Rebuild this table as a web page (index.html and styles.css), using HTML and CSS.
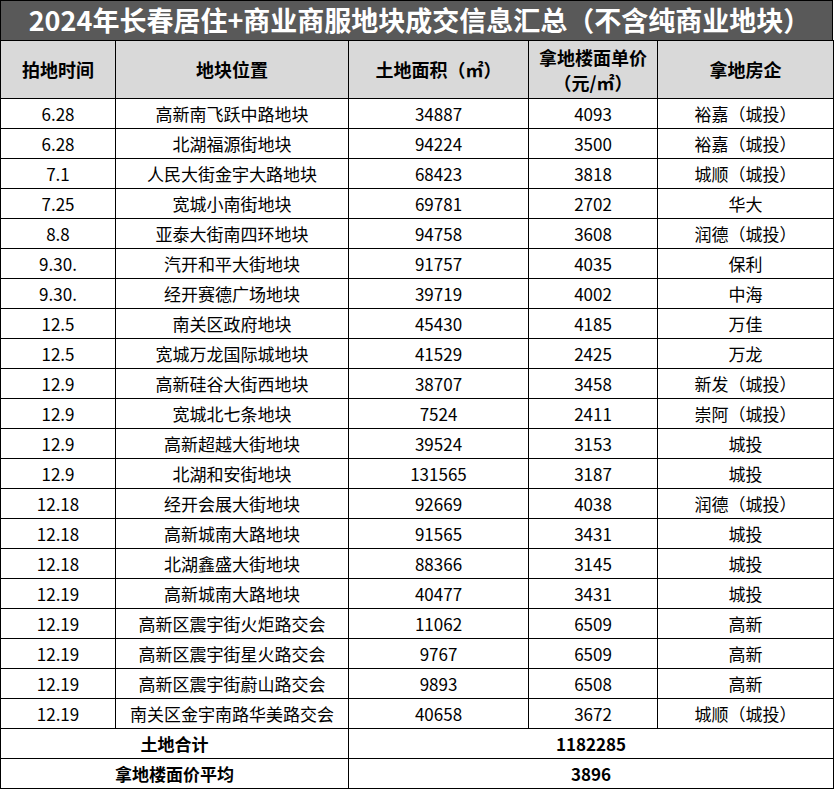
FILE: index.html
```html
<!DOCTYPE html>
<html lang="zh-CN">
<head>
<meta charset="utf-8">
<title>2024年长春居住+商业商服地块成交信息汇总</title>
<link rel="stylesheet" href="styles.css">
</head>
<body>
<div class="sheet">
  <div class="title">2024年长春居住+商业商服地块成交信息汇总（不含纯商业地块）</div>
  <table class="grid">
    <colgroup>
      <col class="c1"><col class="c2"><col class="c3"><col class="c4"><col class="c5">
    </colgroup>
    <thead>
      <tr class="head">
        <th>拍地时间</th>
        <th>地块位置</th>
        <th>土地面积（㎡）</th>
        <th>拿地楼面单价<br>（元/㎡）</th>
        <th>拿地房企</th>
      </tr>
    </thead>
    <tbody>
      <tr><td>6.28</td><td>高新南飞跃中路地块</td><td>34887</td><td>4093</td><td>裕嘉（城投）</td></tr>
      <tr><td>6.28</td><td>北湖福源街地块</td><td>94224</td><td>3500</td><td>裕嘉（城投）</td></tr>
      <tr><td>7.1</td><td>人民大街金宇大路地块</td><td>68423</td><td>3818</td><td>城顺（城投）</td></tr>
      <tr><td>7.25</td><td>宽城小南街地块</td><td>69781</td><td>2702</td><td>华大</td></tr>
      <tr><td>8.8</td><td>亚泰大街南四环地块</td><td>94758</td><td>3608</td><td>润德（城投）</td></tr>
      <tr><td>9.30.</td><td>汽开和平大街地块</td><td>91757</td><td>4035</td><td>保利</td></tr>
      <tr><td>9.30.</td><td>经开赛德广场地块</td><td>39719</td><td>4002</td><td>中海</td></tr>
      <tr><td>12.5</td><td>南关区政府地块</td><td>45430</td><td>4185</td><td>万佳</td></tr>
      <tr><td>12.5</td><td>宽城万龙国际城地块</td><td>41529</td><td>2425</td><td>万龙</td></tr>
      <tr><td>12.9</td><td>高新硅谷大街西地块</td><td>38707</td><td>3458</td><td>新发（城投）</td></tr>
      <tr><td>12.9</td><td>宽城北七条地块</td><td>7524</td><td>2411</td><td>崇阿（城投）</td></tr>
      <tr><td>12.9</td><td>高新超越大街地块</td><td>39524</td><td>3153</td><td>城投</td></tr>
      <tr><td>12.9</td><td>北湖和安街地块</td><td>131565</td><td>3187</td><td>城投</td></tr>
      <tr><td>12.18</td><td>经开会展大街地块</td><td>92669</td><td>4038</td><td>润德（城投）</td></tr>
      <tr><td>12.18</td><td>高新城南大路地块</td><td>91565</td><td>3431</td><td>城投</td></tr>
      <tr><td>12.18</td><td>北湖鑫盛大街地块</td><td>88366</td><td>3145</td><td>城投</td></tr>
      <tr><td>12.19</td><td>高新城南大路地块</td><td>40477</td><td>3431</td><td>城投</td></tr>
      <tr><td>12.19</td><td>高新区震宇街火炬路交会</td><td>11062</td><td>6509</td><td>高新</td></tr>
      <tr><td>12.19</td><td>高新区震宇街星火路交会</td><td>9767</td><td>6509</td><td>高新</td></tr>
      <tr><td>12.19</td><td>高新区震宇街蔚山路交会</td><td>9893</td><td>6508</td><td>高新</td></tr>
      <tr><td>12.19</td><td>南关区金宇南路华美路交会</td><td>40658</td><td>3672</td><td>城顺（城投）</td></tr>
      <tr class="sum"><td colspan="2">土地合计</td><td colspan="3">1182285</td></tr>
      <tr class="sum"><td colspan="2">拿地楼面价平均</td><td colspan="3">3896</td></tr>
    </tbody>
  </table>
</div>
</body>
</html>
```

FILE: styles.css
```css
html, body {
  margin: 0;
  padding: 0;
  background: #ffffff;
}

.sheet {
  width: 833px;
  font-family: "Noto Sans CJK SC", "Noto Sans", sans-serif;
  color: #000;
}

.title {
  box-sizing: border-box;
  height: 40px;
  border: 1px solid #000;
  border-bottom: none;
  background: #595959;
  color: #ffffff;
  font-weight: 700;
  font-size: 27px;
  line-height: 38px;
  text-align: center;
  white-space: nowrap;
  padding-left: 6px;
}

.grid {
  width: 833px;
  border-collapse: collapse;
  table-layout: fixed;
}

.c1 { width: 115px; }
.c2 { width: 233px; }
.c3 { width: 180px; }
.c4 { width: 129px; }
.c5 { width: 176px; }

.grid th,
.grid td {
  border: 1px solid #000;
  padding: 0;
  text-align: center;
  vertical-align: middle;
  white-space: nowrap;
  overflow: hidden;
}

.grid td {
  height: 29px;
  font-size: 17px;
  line-height: 20px;
  font-weight: 400;
}

.head th {
  height: 57px;
  background: #d9d9d9;
  font-size: 18px;
  line-height: 25px;
  font-weight: 700;
}

.sum td {
  font-weight: 700;
}
```
